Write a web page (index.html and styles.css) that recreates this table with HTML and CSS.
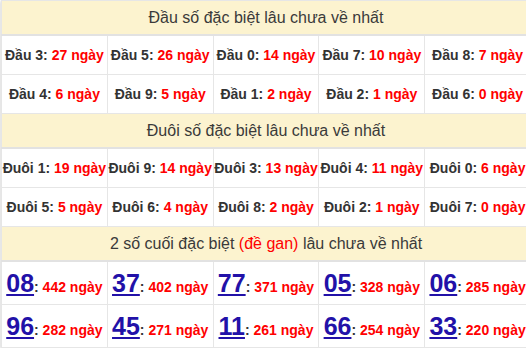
FILE: index.html
```html
<!DOCTYPE html>
<html>
<head>
<meta charset="utf-8">
<link rel="stylesheet" href="styles.css">
</head>
<body>
<div class="wrap">
<table class="gan">
  <tr><th colspan="5" class="head">Đầu số đặc biệt lâu chưa về nhất</th></tr>
  <tr>
    <td><b>Đầu 3:</b> <span class="v">27 ngày</span></td>
    <td><b>Đầu 5:</b> <span class="v">26 ngày</span></td>
    <td><b>Đầu 0:</b> <span class="v">14 ngày</span></td>
    <td><b>Đầu 7:</b> <span class="v">10 ngày</span></td>
    <td><b>Đầu 8:</b> <span class="v">7 ngày</span></td>
  </tr>
  <tr>
    <td><b>Đầu 4:</b> <span class="v">6 ngày</span></td>
    <td><b>Đầu 9:</b> <span class="v">5 ngày</span></td>
    <td><b>Đầu 1:</b> <span class="v">2 ngày</span></td>
    <td><b>Đầu 2:</b> <span class="v">1 ngày</span></td>
    <td><b>Đầu 6:</b> <span class="v">0 ngày</span></td>
  </tr>
  <tr><th colspan="5" class="head">Đuôi số đặc biệt lâu chưa về nhất</th></tr>
  <tr>
    <td><b>Đuôi 1:</b> <span class="v">19 ngày</span></td>
    <td><b>Đuôi 9:</b> <span class="v">14 ngày</span></td>
    <td><b>Đuôi 3:</b> <span class="v">13 ngày</span></td>
    <td><b>Đuôi 4:</b> <span class="v">11 ngày</span></td>
    <td><b>Đuôi 0:</b> <span class="v">6 ngày</span></td>
  </tr>
  <tr>
    <td><b>Đuôi 5:</b> <span class="v">5 ngày</span></td>
    <td><b>Đuôi 6:</b> <span class="v">4 ngày</span></td>
    <td><b>Đuôi 8:</b> <span class="v">2 ngày</span></td>
    <td><b>Đuôi 2:</b> <span class="v">1 ngày</span></td>
    <td><b>Đuôi 7:</b> <span class="v">0 ngày</span></td>
  </tr>
  <tr><th colspan="5" class="head">2 số cuối đặc biệt <span class="red">(đề gan)</span> lâu chưa về nhất</th></tr>
  <tr class="big">
    <td><a class="num">08</a><b>:</b> <span class="v">442 ngày</span></td>
    <td><a class="num">37</a><b>:</b> <span class="v">402 ngày</span></td>
    <td><a class="num">77</a><b>:</b> <span class="v">371 ngày</span></td>
    <td><a class="num">05</a><b>:</b> <span class="v">328 ngày</span></td>
    <td><a class="num">06</a><b>:</b> <span class="v">285 ngày</span></td>
  </tr>
  <tr class="big">
    <td><a class="num">96</a><b>:</b> <span class="v">282 ngày</span></td>
    <td><a class="num">45</a><b>:</b> <span class="v">271 ngày</span></td>
    <td><a class="num">11</a><b>:</b> <span class="v">261 ngày</span></td>
    <td><a class="num">66</a><b>:</b> <span class="v">254 ngày</span></td>
    <td><a class="num">33</a><b>:</b> <span class="v">220 ngày</span></td>
  </tr>
</table>
</div>
</body>
</html>
```
FILE: styles.css
```css
html, body {
  margin: 0;
  padding: 0;
  background: #ffffff;
  overflow: hidden;
}
.wrap {
  width: 530px;
  padding: 0 0 0 1px;
}
.gan {
  width: 530px;
  table-layout: fixed;
  border-collapse: collapse;
  font-family: "Liberation Sans", Arial, sans-serif;
  color: #333;
  box-shadow: 0 1px 3px rgba(0,0,0,0.25);
}
.gan td, .gan th {
  border: 1px solid #e6e6e6;
  text-align: center;
  padding: 0;
  white-space: nowrap;
  overflow: hidden;
}
.head {
  background: #fcf3cf;
  font-weight: normal;
  font-size: 16px;
  height: 33px;
  color: #3a3a3a;
  border-bottom: 2px solid #e2e2e2 !important;
}
.gan td {
  font-size: 14px;
  height: 38px;
}
.gan td b {
  font-weight: bold;
  color: #333;
}
.v {
  color: #ff0000;
  font-weight: bold;
}
.red {
  color: #ff0000;
}
.big td {
  height: 42px;
}
.num {
  color: #2211a8;
  font-size: 25px;
  font-weight: bold;
  text-decoration: underline;
  text-decoration-thickness: 2px;
  text-underline-offset: 2px;
}
```
